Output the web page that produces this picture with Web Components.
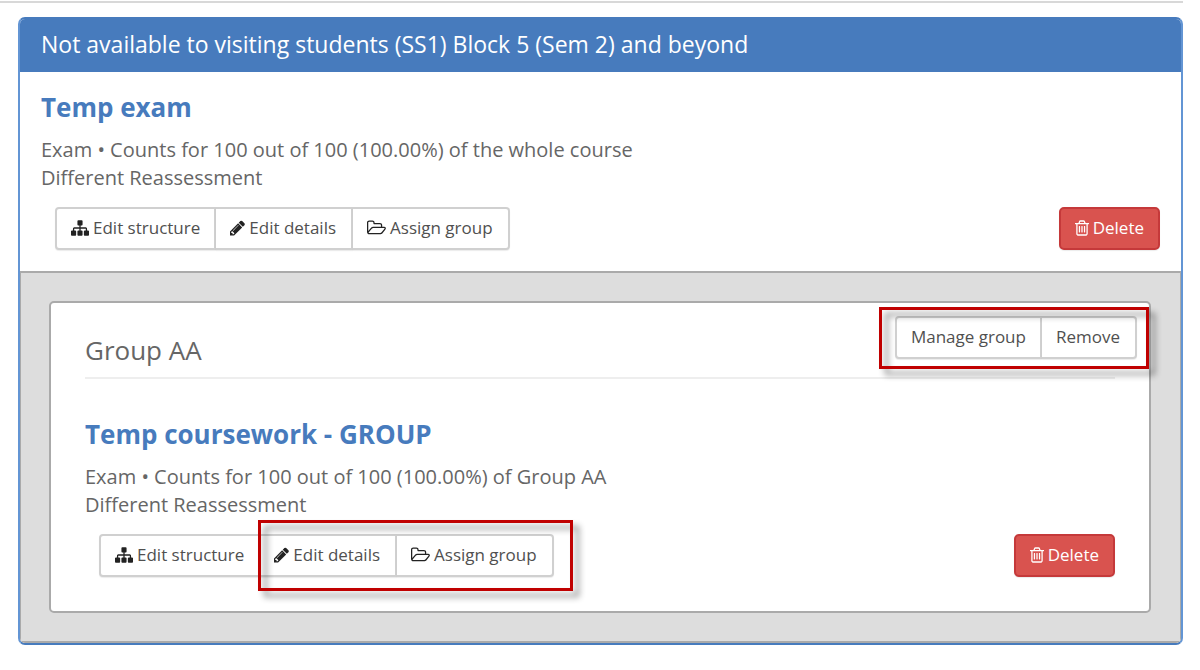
<!DOCTYPE html>
<html lang="en">
<head>
<meta charset="utf-8">
<title>Assessment structure</title>
<style>
  body { margin: 0; background: #fff; color: #666; font: 20px/28px "Open Sans", sans-serif; }
</style>
</head>
<body>
<assessment-page>
  <assessment-panel>
    <span slot="title">Not available to visiting students (SS1) Block 5 (Sem 2) and beyond</span>
    <assessment-item>
      <span slot="name">Temp exam</span>
      <span slot="weight">Exam • Counts for 100 out of 100 (100.00%) of the whole course</span>
      <span slot="note">Different Reassessment</span>
      <tool-button slot="tools" icon="sitemap" place="first">Edit structure</tool-button>
      <tool-button slot="tools" icon="pencil">Edit details</tool-button>
      <tool-button slot="tools" icon="folder" place="last">Assign group</tool-button>
    </assessment-item>
    <group-card slot="groups">
      <span slot="title">Group AA</span>
      <call-out slot="tools">
        <tool-button place="first">Manage group</tool-button>
        <tool-button place="last">Remove</tool-button>
      </call-out>
      <assessment-item inset>
        <span slot="name">Temp coursework - GROUP</span>
        <span slot="weight">Exam • Counts for 100 out of 100 (100.00%) of Group AA</span>
        <span slot="note">Different Reassessment</span>
        <tool-button slot="tools" icon="sitemap" place="first">Edit structure</tool-button>
        <call-out slot="tools" joined>
          <tool-button icon="pencil">Edit details</tool-button>
          <tool-button icon="folder" place="last">Assign group</tool-button>
        </call-out>
      </assessment-item>
    </group-card>
  </assessment-panel>
</assessment-page>

<script>
const ICONS = {
  sitemap: ['0 0 1792 1792', 18, 'M1792 1248v320q0 40-28 68t-68 28h-320q-40 0-68-28t-28-68v-320q0-40 28-68t68-28h96v-192h-512v192h96q40 0 68 28t28 68v320q0 40-28 68t-68 28h-320q-40 0-68-28t-28-68v-320q0-40 28-68t68-28h96v-192h-512v192h96q40 0 68 28t28 68v320q0 40-28 68t-68 28h-320q-40 0-68-28t-28-68v-320q0-40 28-68t68-28h96v-192q0-52 38-90t90-38h512v-192h-96q-40 0-68-28t-28-68v-320q0-40 28-68t68-28h320q40 0 68 28t28 68v320q0 40-28 68t-68 28h-96v192h512q52 0 90 38t38 90v192h96q40 0 68 28t28 68z'],
  pencil: ['128 0 1536 1792', 15, 'M491 1536l91-91-235-235-91 91v107h128v128h107zm523-928q0-22-22-22-10 0-17 7l-542 542q-7 7-7 17 0 22 22 22 10 0 17-7l542-542q7-7 7-17zm-54-192l416 416-832 832h-416v-416zm683 96q0 53-37 90l-166 166-416-416 166-165q36-38 90-38 53 0 91 38l235 234q37 39 37 91z'],
  folder: ['64 0 1920 1792', 19, 'M1845 931q0-35-53-35h-1088q-40 0-85.5 21.5t-71.5 52.5l-294 363q-18 24-18 40 0 35 53 35h1088q40 0 86-22t71-53l294-363q18-22 18-39zm-1141-163h768v-160q0-40-28-68t-68-28h-576q-40 0-68-28t-28-68v-64q0-40-28-68t-68-28h-320q-40 0-68 28t-28 68v853l256-315q44-53 116-87.5t140-34.5zm1269 163q0 62-46 120l-295 363q-43 53-116 87.5t-140 34.5h-1088q-92 0-158-66t-66-158v-960q0-92 66-158t158-66h320q92 0 158 66t66 158v32h544q92 0 158 66t66 158v160h192q54 0 99 24.5t67 70.5q15 32 15 68z'],
  trash: ['192 0 1408 1792', 14, 'M704 736v576q0 14-9 23t-23 9h-64q-14 0-23-9t-9-23v-576q0-14 9-23t23-9h64q14 0 23 9t9 23zm256 0v576q0 14-9 23t-23 9h-64q-14 0-23-9t-9-23v-576q0-14 9-23t23-9h64q14 0 23 9t9 23zm256 0v576q0 14-9 23t-23 9h-64q-14 0-23-9t-9-23v-576q0-14 9-23t23-9h64q14 0 23 9t9 23zm128 724v-948h-896v948q0 22 7 40.5t14.5 27 10.5 8.5h832q3 0 10.5-8.5t14.5-27 7-40.5zm-672-1076h448l-48-117q-7-9-17-11h-317q-10 2-17 11zm928 32v64q0 14-9 23t-23 9h-96v948q0 83-47 143.5t-113 60.5h-832q-66 0-113-58.5t-47-141.5v-952h-96q-14 0-23-9t-9-23v-64q0-14 9-23t23-9h309l70-167q15-37 54-63t79-26h320q40 0 79 26t54 63l70 167h309q14 0 23 9t9 23z']
};

function define(name, html) {
  const template = document.createElement('template');
  template.innerHTML = html;
  customElements.define(name, class extends HTMLElement {
    constructor() {
      super();
      this.attachShadow({ mode: 'open' }).append(template.content.cloneNode(true));
    }
  });
}

class ToolButton extends HTMLElement {
  connectedCallback() {
    if (this.shadowRoot) return;
    const icon = ICONS[this.getAttribute('icon')];
    const svg = icon ? `<svg viewBox="${icon[0]}" width="${icon[1]}" height="18" aria-hidden="true"><path fill="currentColor" d="${icon[2]}"/></svg>` : '';
    this.attachShadow({ mode: 'open' }).innerHTML = `
      <style>
        :host { display: block; }
        button {
          display: flex; align-items: center; gap: 4px; box-sizing: border-box; height: 43px;
          margin: 0; padding: 0 15px 2px 14px; border: 2px solid #d0d0d0; border-left-width: 0;
          background: #fff; color: #505050; font: 17px/24px "Open Sans", sans-serif;
          white-space: nowrap; cursor: pointer; box-shadow: 0 1px 1px rgba(0,0,0,.08);
        }
        svg { flex: none; color: #222; }
        :host([place="first"]) button { padding-right: 14px; border-left-width: 2px; border-radius: 4px 0 0 4px; }
        :host([place="last"]) button { border-radius: 0 4px 4px 0; }
        :host([danger]) button { padding: 0 14px 2px; border: 2px solid #c5393a; border-radius: 5px; background: #d9534f; color: #fff; }
        :host([danger]) svg { color: #fff; }
      </style>
      <button type="button">${svg}<span><slot></slot></span></button>`;
  }
}
customElements.define('tool-button', ToolButton);

define('call-out', `
  <style>
    :host { display: flex; position: relative; }
    .frame {
      position: absolute; inset: -9px -12px -10px -16px; border: 3px solid #c00000;
      filter: drop-shadow(6px 6px 3px rgba(0,0,0,.45)); pointer-events: none;
    }
    :host([joined]) .frame { inset: -14px -19px -14px -2px; }
  </style>
  <slot></slot><div class="frame"></div>`);

define('assessment-item', `
  <style>
    :host { display: block; padding: 18px 21px 21px; }
    :host([inset]) { padding: 38px 0 0; }
    h3 { margin: 0 0 11px; color: #477bbd; font-size: 26px; line-height: 35px; font-weight: 700; }
    p { margin: 0; }
    .bar { display: flex; justify-content: space-between; margin-top: 15px; padding-left: 14px; }
    .tools { display: flex; }
  </style>
  <h3><slot name="name"></slot></h3>
  <p><slot name="weight"></slot></p>
  <p><slot name="note"></slot></p>
  <div class="bar">
    <div class="tools"><slot name="tools"></slot></div>
    <tool-button icon="trash" danger>Delete</tool-button>
  </div>`);

define('group-card', `
  <style>
    :host { display: block; padding: 13px 34px 34px; border: 2px solid #aaa; border-radius: 5px; background: #fff; }
    header { display: flex; align-items: flex-start; justify-content: space-between; margin-right: -22px; }
    h2 { margin: 15px 0 0; font-size: 26px; line-height: 39px; font-weight: 400; }
    .rule { height: 2px; margin-top: 7px; background: #eee; }
  </style>
  <header><h2><slot name="title"></slot></h2><slot name="tools"></slot></header>
  <div class="rule"></div>
  <slot></slot>`);

define('assessment-panel', `
  <style>
    :host { display: block; overflow: hidden; border: 2px solid #477bbd; border-left-color: #6395d4; border-right-color: #6395d4; border-radius: 7px; }
    h1 { margin: 0; padding: 8px 21px 11px; background: #477bbd; color: #fff; font-size: 23px; line-height: 34px; font-weight: 400; }
    .groups { padding: 28px 29px 28px 28px; border: 2px solid #aaa; border-width: 2px 1px; background: #ddd; }
  </style>
  <h1><slot name="title"></slot></h1>
  <slot></slot>
  <div class="groups"><slot name="groups"></slot></div>`);

define('assessment-page', `
  <style>
    :host { display: block; padding: 1px 17px 24px 0; }
    .top { height: 2px; background: #d8d8d8; }
    main { padding: 14px 0 0 18px; }
  </style>
  <div class="top"></div>
  <main><slot></slot></main>`);
</script>
</body>
</html>
